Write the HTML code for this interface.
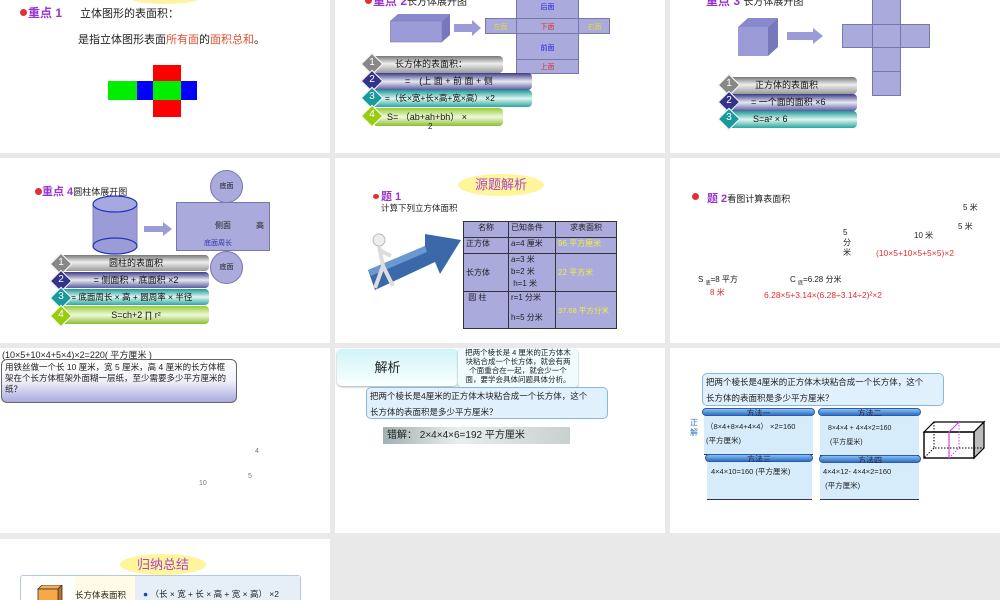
<!DOCTYPE html>
<html><head><meta charset="utf-8"><style>
*{margin:0;padding:0;box-sizing:border-box}
body{width:1000px;height:600px;background:#e9e9e9;position:relative;overflow:hidden;font-family:"Liberation Sans","Noto Sans CJK SC",sans-serif;color:#222}
.s{position:absolute;background:#fff;overflow:hidden}
.a{position:absolute;white-space:nowrap}
.p{color:#9933cc;font-weight:bold}
.dot{position:absolute;width:7px;height:7px;border-radius:50%;background:#e03030}
.bar{position:absolute;border-radius:0 4px 4px 0;font-size:9px;line-height:17px;color:#111}
.g1{background:linear-gradient(#777,#eee 45%,#999)}
.g2{background:linear-gradient(#3a3a8a,#e8e8f0 50%,#5a5aa0)}
.g3{background:linear-gradient(#1a9a9a,#e0f4ef 50%,#2aa8a0)}
.g4{background:linear-gradient(#99cc33,#f0f8e0 50%,#88c030)}
.dm{position:absolute;width:16px;height:16px;transform:rotate(45deg);border:1px solid #fff}
.dn{position:absolute;width:22px;text-align:center;color:#fff;font-size:10px}
.lv{background:#aaaadd;border:1px solid #7777aa}
.lab{font-size:7px;position:absolute;text-align:center}
td{border:1px solid #333;font-size:8px;padding:0 2px;vertical-align:top}
</style></head><body>

<!-- slide 1 -->
<div class="s" style="left:0;top:0;width:330px;height:153px">
<div class="a" style="left:130px;top:-8px;width:70px;height:12px;background:#fff2a0;border-radius:50%"></div>
<div class="dot" style="left:20px;top:9px"></div>
<div class="a p" style="left:28px;top:4px;font-size:12px">重点 1</div>
<div class="a" style="left:80px;top:5px;font-size:11px">立体图形的表面积：</div>
<div class="a" style="left:78px;top:31px;font-size:11px">是指立体图形表面<span style="color:#e05030">所有面</span>的<span style="color:#e05030">面积总和</span>。</div>
<div class="a" style="left:153px;top:65px;width:28px;height:17px;background:#f00"></div>
<div class="a" style="left:108px;top:81px;width:29px;height:19px;background:#0e0"></div>
<div class="a" style="left:137px;top:81px;width:16px;height:19px;background:#00f"></div>
<div class="a" style="left:153px;top:81px;width:28px;height:19px;background:#0e0"></div>
<div class="a" style="left:181px;top:81px;width:16px;height:19px;background:#00f"></div>
<div class="a" style="left:153px;top:100px;width:28px;height:17px;background:#f00"></div>
</div>

<!-- slide 2 -->
<div class="s" style="left:335px;top:0;width:330px;height:153px">
<div class="dot" style="left:30px;top:-3px"></div>
<div class="a p" style="left:38px;top:-8px;font-size:12px">重点 2<span style="color:#222;font-weight:normal;font-size:10px">长方体展开图</span></div>
<svg class="a" style="left:55px;top:13px" width="62" height="31"><polygon points="0,8 8,1 60,1 52,8" fill="#8888cc"/><polygon points="52,8 60,1 60,22 52,29" fill="#7777bb"/><rect x="0" y="8" width="52" height="21" fill="#9b9bd8" stroke="#8080b0" stroke-width=".6"/></svg>
<svg class="a" style="left:119px;top:20px" width="28" height="16"><polygon points="0,4 18,4 18,0 27,8 18,16 18,12 0,12" fill="#9b9bd8"/></svg>
<div class="a lv" style="left:150px;top:18px;width:125px;height:16px"></div>
<div class="a lv" style="left:181px;top:-2px;width:63px;height:76px"></div>
<div class="a" style="left:181px;top:18px;width:63px;height:16px;border-top:1px solid #7777aa;border-bottom:1px solid #7777aa"></div>
<div class="a" style="left:181px;top:59px;width:63px;height:1px;background:#7777aa"></div>
<div class="lab" style="left:150px;top:22px;width:31px;color:#dddd33">左面</div>
<div class="lab" style="left:181px;top:22px;width:63px;color:#e03030">下面</div>
<div class="lab" style="left:244px;top:22px;width:31px;color:#dddd33">右面</div>
<div class="lab" style="left:181px;top:2px;width:63px;color:#2222dd">后面</div>
<div class="lab" style="left:181px;top:43px;width:63px;color:#2222dd">前面</div>
<div class="lab" style="left:181px;top:62px;width:63px;color:#e03030">上面</div>
<div class="bar g1" style="left:40px;top:56px;width:128px;padding-left:20px">长方体的表面积：</div>
<div class="bar g2" style="left:40px;top:73px;width:157px;padding-left:30px">=　(上 面 + 前 面 + 侧</div>
<div class="bar g3" style="left:40px;top:90px;width:157px;padding-left:10px;font-size:8.5px">=（长×宽+长×高+宽×高） ×2</div>
<div class="bar g4" style="left:40px;top:108px;width:128px;padding-left:12px;line-height:18px">S= （ab+ah+bh） ×</div>
<div class="a" style="left:93px;top:122px;font-size:8px">2</div>
<div class="dm" style="left:29px;top:56px;background:#888"></div><div class="dn" style="left:26px;top:57px">1</div>
<div class="dm" style="left:29px;top:73px;background:#33338a"></div><div class="dn" style="left:26px;top:74px">2</div>
<div class="dm" style="left:29px;top:90px;background:#1a9a9a"></div><div class="dn" style="left:26px;top:91px">3</div>
<div class="dm" style="left:29px;top:108px;background:#99cc11"></div><div class="dn" style="left:26px;top:109px">4</div>
</div>

<!-- slide 3 -->
<div class="s" style="left:670px;top:0;width:330px;height:153px">
<div class="a p" style="left:36px;top:-8px;font-size:12px">重点 3 <span style="color:#222;font-weight:normal;font-size:10px">长方体展开图</span></div>
<svg class="a" style="left:68px;top:17px" width="42" height="40"><polygon points="0,10 10,1 40,1 30,10" fill="#8888cc"/><polygon points="30,10 40,1 40,30 30,39" fill="#7777bb"/><rect x="0" y="10" width="30" height="29" fill="#9b9bd8"/></svg>
<svg class="a" style="left:117px;top:28px" width="37" height="16"><polygon points="0,4 26,4 26,0 36,8 26,16 26,12 0,12" fill="#9b9bd8"/></svg>
<div class="a lv" style="left:172px;top:24px;width:88px;height:24px"></div>
<div class="a lv" style="left:202px;top:-2px;width:29px;height:98px"></div>
<div class="a" style="left:202px;top:24px;width:29px;height:24px;border:1px solid #7777aa"></div>
<div class="a" style="left:202px;top:71px;width:29px;height:1px;background:#7777aa"></div>
<div class="bar g1" style="left:61px;top:77px;width:126px;padding-left:24px;font-size:9px">正方体的表面积</div>
<div class="bar g2" style="left:61px;top:94px;width:126px;padding-left:20px">= 一个面的面积 ×6</div>
<div class="bar g3" style="left:61px;top:111px;width:126px;padding-left:22px">S=a² × 6</div>
<div class="dm" style="left:51px;top:77px;background:#888"></div><div class="dn" style="left:48px;top:78px">1</div>
<div class="dm" style="left:51px;top:94px;background:#33338a"></div><div class="dn" style="left:48px;top:95px">2</div>
<div class="dm" style="left:51px;top:111px;background:#1a9a9a"></div><div class="dn" style="left:48px;top:112px">3</div>
</div>

<!-- slide 4 -->
<div class="s" style="left:0;top:158px;width:330px;height:185px">
<div class="dot" style="left:35px;top:30px"></div>
<div class="a p" style="left:42px;top:25px;font-size:11px">重点 4<span style="color:#222;font-weight:normal;font-size:9px">圆柱体展开图</span></div>
<svg class="a" style="left:91px;top:36px" width="50" height="62"><path d="M2,10 V52 A22,8 0 0 0 46,52 V10" fill="#9b9bd8" stroke="#8080c0"/><ellipse cx="24" cy="10" rx="22" ry="8" fill="#a8a8e0" stroke="#2233bb" stroke-width="1.2"/><path d="M2,52 A22,8 0 0 1 46,52" fill="none" stroke="#2233bb" stroke-width="1.2"/><path d="M2,52 A22,8 0 0 0 46,52" fill="none" stroke="#2233bb" stroke-width="1.2"/></svg>
<svg class="a" style="left:144px;top:64px" width="29" height="14"><polygon points="0,4 19,4 19,0 28,7 19,14 19,10 0,10" fill="#9b9bd8"/></svg>
<div class="a lv" style="left:176px;top:44px;width:94px;height:49px"></div>
<div class="a" style="left:215px;top:62px;font-size:8px">侧面</div>
<div class="a" style="left:256px;top:62px;font-size:8px">高</div>
<div class="a" style="left:204px;top:80px;font-size:7px;color:#3333aa">底面周长</div>
<div class="a lv" style="left:210px;top:12px;width:33px;height:33px;border-radius:50%;font-size:7px;text-align:center;line-height:31px">底面</div>
<div class="a lv" style="left:210px;top:93px;width:33px;height:33px;border-radius:50%;font-size:7px;text-align:center;line-height:31px">底面</div>
<div class="bar g1" style="left:63px;top:97px;width:146px;text-align:center;line-height:16px">圆柱的表面积</div>
<div class="bar g2" style="left:63px;top:114px;width:146px;text-align:center;line-height:16px">= 侧面积 + 底面积 ×2</div>
<div class="bar g3" style="left:63px;top:131px;width:146px;padding-left:8px;line-height:16px;font-size:8.5px">= 底面周长 × 高 + 圆周率 × 半径</div>
<div class="bar g4" style="left:63px;top:148px;width:146px;text-align:center;line-height:18px">S=ch+2 ∏ r²</div>
<div class="dm" style="left:53px;top:98px;background:#888"></div><div class="dn" style="left:50px;top:99px">1</div>
<div class="dm" style="left:53px;top:115px;background:#33338a"></div><div class="dn" style="left:50px;top:116px">2</div>
<div class="dm" style="left:53px;top:132px;background:#1a9a9a"></div><div class="dn" style="left:50px;top:133px">3</div>
<div class="dm" style="left:53px;top:150px;background:#99cc11"></div><div class="dn" style="left:50px;top:151px">4</div>
</div>

<!-- slide 5 -->
<div class="s" style="left:335px;top:158px;width:330px;height:185px">
<div class="a" style="left:123px;top:16px;width:86px;height:22px;background:#fff59a;border-radius:50%;color:#b044cc;font-size:13px;text-align:center;line-height:22px">源题解析</div>
<div class="dot" style="left:38px;top:36px;width:6px;height:5px"></div>
<div class="a p" style="left:46px;top:30px;font-size:11px">题 1</div>
<div class="a" style="left:46px;top:44px;font-size:8.5px">计算下列立方体面积</div>
<svg class="a" style="left:30px;top:72px" width="100" height="62"><polygon points="3,40 60,16 60,4 96,10 75,44 70,32 10,60" fill="#3a68a8"/><polygon points="3,40 60,16 62,22 6,46" fill="#6a98d0"/><circle cx="14" cy="10" r="6" fill="#eee" stroke="#bbb"/><path d="M14,16 L18,36 L10,58 M18,36 L28,56 M14,20 L26,26" stroke="#ddd" stroke-width="4" fill="none"/></svg>
<table class="a" style="left:128px;top:63px;width:154px;height:108px;border-collapse:collapse;background:#aaaadd;border:1.5px solid #333">
<tr style="height:16px"><td style="width:45px;text-align:center">名称</td><td style="width:47px">已知条件</td><td style="text-align:center">求表面积</td></tr>
<tr style="height:16px"><td>正方体</td><td>a=4 厘米</td><td style="color:#eeee44">96 平方厘米</td></tr>
<tr style="height:38px"><td style="vertical-align:middle">长方体</td><td style="line-height:12px">a=3 米<br>b=2 米<br>&nbsp;h=1 米</td><td style="color:#eeee44;vertical-align:middle">22 平方米</td></tr>
<tr><td>&nbsp;圆 柱</td><td>r=1 分米<br><br>h=5 分米</td><td style="color:#eeee44;vertical-align:middle;font-size:7.5px">37.68 平方分米</td></tr>
</table>
</div>

<!-- slide 6 -->
<div class="s" style="left:670px;top:158px;width:330px;height:185px">
<div class="dot" style="left:22px;top:35px"></div>
<div class="a p" style="left:37px;top:32px;font-size:11px">题 2<span style="color:#222;font-weight:normal;font-size:9px">看图计算表面积</span></div>
<div class="a" style="left:293px;top:44px;font-size:8px">5 米</div>
<div class="a" style="left:288px;top:63px;font-size:8px">5 米</div>
<div class="a" style="left:244px;top:72px;font-size:8px">10 米</div>
<div class="a" style="left:173px;top:70px;font-size:8px;line-height:10px;white-space:normal;width:8px">5 分 米</div>
<div class="a" style="left:206px;top:90px;font-size:8.5px;color:#e03030">(10×5+10×5+5×5)×2</div>
<div class="a" style="left:28px;top:116px;font-size:8px">S <sub style="font-size:5px">底</sub>=8 平方</div>
<div class="a" style="left:40px;top:129px;font-size:8px;color:#e03030">8 米</div>
<div class="a" style="left:120px;top:116px;font-size:8px">C <sub style="font-size:5px">底</sub>=6.28 分米</div>
<div class="a" style="left:94px;top:132px;font-size:8.5px;color:#e03030">6.28×5+3.14×(6.28÷3.14÷2)²×2</div>
</div>

<!-- slide 7 -->
<div class="s" style="left:0;top:348px;width:330px;height:185px">
<div class="a" style="left:2px;top:0px;font-size:9px">(10×5+10×4+5×4)×2=220( 平方厘米 )</div>
<div class="a" style="left:1px;top:11px;width:236px;height:44px;border:1px solid #666;border-radius:6px;background:linear-gradient(#fff,#f0f0fa 50%,#aaaae0);font-size:8.5px;line-height:11px;padding:2px 3px;white-space:normal">用铁丝做一个长 10 厘米，宽 5 厘米，高 4 厘米的长方体框架在个长方体框架外面糊一层纸，至少需要多少平方厘米的纸？</div>
<div class="a" style="left:255px;top:100px;font-size:7px;color:#777">4</div>
<div class="a" style="left:248px;top:125px;font-size:7px;color:#777">5</div>
<div class="a" style="left:199px;top:132px;font-size:7px;color:#777">10</div>
</div>

<!-- slide 8 -->
<div class="s" style="left:335px;top:348px;width:330px;height:185px">
<div class="a" style="left:2px;top:1px;width:121px;height:37px;border-radius:5px;background:linear-gradient(#d0f4f8,#fbffff);box-shadow:0 1px 2px #aaa;font-size:13px;text-align:center;line-height:37px;padding-right:20px">解析</div>
<div class="a" style="left:123px;top:0px;width:120px;height:40px;border-radius:5px;background:#f0fbfd;box-shadow:0 1px 2px #aaa;font-size:7.5px;line-height:9px;padding:0 6px;white-space:normal;text-align:center">把两个棱长是 4 厘米的正方体木块粘合成一个长方体，就会有两个面重合在一起，就会少一个面，要学会具体问题具体分析。</div>
<div class="a" style="left:31px;top:39px;width:242px;height:32px;border:1px solid #88b8e0;border-radius:5px;background:#e0f0fc;font-size:8.5px;line-height:16px;padding-left:3px">把两个棱长是4厘米的正方体木块粘合成一个长方体，这个<br>长方体的表面积是多少平方厘米？</div>
<div class="a" style="left:48px;top:79px;width:187px;height:17px;background:linear-gradient(90deg,#a0b0b0,#e8eeee 40%,#c8d0d0);font-size:10px;line-height:17px;padding-left:4px">错解：  2×4×4×6=192 平方厘米</div>
</div>

<!-- slide 9 -->
<div class="s" style="left:670px;top:348px;width:330px;height:185px">
<div class="a" style="left:32px;top:25px;width:242px;height:33px;border:1px solid #88b8e0;border-radius:5px;background:#e0f0fc;font-size:8.5px;line-height:16px;padding-left:3px">把两个棱长是4厘米的正方体木块粘合成一个长方体，这个<br>长方体的表面积是多少平方厘米？</div>
<div class="a" style="left:20px;top:70px;font-size:8px;line-height:10px;color:#3377bb;white-space:normal;width:9px">正解</div>
<div class="a" style="left:32px;top:60px;width:113px;height:8px;border-radius:4px;background:linear-gradient(#88c0f0,#3070c8);border:1px solid #2a5fa8;font-size:8px;line-height:9px;text-align:center;color:#224">方法一</div>
<div class="a" style="left:34px;top:68px;width:109px;height:39px;background:#d6ecfa;border-bottom:1px solid #335;font-size:7.5px;line-height:14px;padding:4px 2px">（8×4+8×4+4×4） ×2=160<br>(平方厘米)</div>
<div class="a" style="left:148px;top:60px;width:103px;height:8px;border-radius:4px;background:linear-gradient(#88c0f0,#3070c8);border:1px solid #2a5fa8;font-size:8px;line-height:9px;text-align:center;color:#224">方法二</div>
<div class="a" style="left:150px;top:68px;width:99px;height:40px;background:#d6ecfa;border-bottom:1px solid #335;font-size:7px;line-height:14px;padding:6px 8px">8×4×4 + 4×4×2=160<br>&nbsp;(平方厘米)</div>
<div class="a" style="left:35px;top:106px;width:108px;height:8px;border-radius:4px;background:linear-gradient(#88c0f0,#3070c8);border:1px solid #2a5fa8;font-size:8px;line-height:9px;text-align:center;color:#224">方法三</div>
<div class="a" style="left:37px;top:114px;width:105px;height:38px;background:#d6ecfa;border-bottom:1px solid #335;font-size:7.5px;padding:4px 4px">4×4×10=160 (平方厘米)</div>
<div class="a" style="left:149px;top:107px;width:102px;height:8px;border-radius:4px;background:linear-gradient(#88c0f0,#3070c8);border:1px solid #2a5fa8;font-size:8px;line-height:9px;text-align:center;color:#224">方法四</div>
<div class="a" style="left:150px;top:115px;width:99px;height:37px;background:#d6ecfa;border-bottom:1px solid #335;font-size:7.5px;line-height:14px;padding:2px 3px">4×4×12- 4×4×2=160<br>&nbsp;(平方厘米)</div>
<svg class="a" style="left:252px;top:72px" width="64" height="40"><polygon points="2,12 12,2 62,2 52,12" fill="#fff" stroke="#000" stroke-width="1.2"/><polygon points="52,12 62,2 62,28 52,38" fill="#bbb" stroke="#000" stroke-width="1.2"/><rect x="2" y="12" width="50" height="26" fill="none" stroke="#000" stroke-width="1.4"/><path d="M12,2 V28 H62 M12,28 L2,38" stroke="#000" stroke-dasharray="1.5,1.5" fill="none"/><path d="M27,12 L37,2 M27,12 V38" stroke="#e040e0" stroke-width="1.2"/><path d="M37,2 V28 L27,38" stroke="#e040e0" stroke-dasharray="1.5,1.5" fill="none"/></svg>
</div>

<!-- slide 10 -->
<div class="s" style="left:0;top:539px;width:330px;height:61px">
<div class="a" style="left:120px;top:15px;width:86px;height:21px;background:#fff59a;border-radius:50%;color:#b044cc;font-size:13px;text-align:center;line-height:21px">归纳总结</div>
<div class="a" style="left:20px;top:36px;width:281px;height:30px;border:1px solid #b8c8d8;border-radius:3px;background:#fff"></div>
<div class="a" style="left:75px;top:37px;width:60px;height:24px;background:#fffbe6"></div>
<div class="a" style="left:135px;top:37px;width:165px;height:24px;background:#e6eef8"></div>
<svg class="a" style="left:34px;top:46px" width="30" height="16"><polygon points="4,4 8,0 28,0 24,4" fill="#f0b060" stroke="#333" stroke-width=".8"/><polygon points="24,4 28,0 28,16 24,16" fill="#c07020" stroke="#333" stroke-width=".8"/><rect x="4" y="4" width="20" height="14" fill="#f8a848" stroke="#333" stroke-width=".8"/></svg>
<div class="a" style="left:75px;top:50px;font-size:8.5px">长方体表面积</div>
<div class="a" style="left:143px;top:49px;font-size:8.5px"><span style="color:#2244aa">●</span> （长 × 宽 + 长 × 高 + 宽 × 高） ×2</div>
</div>

</body></html>
